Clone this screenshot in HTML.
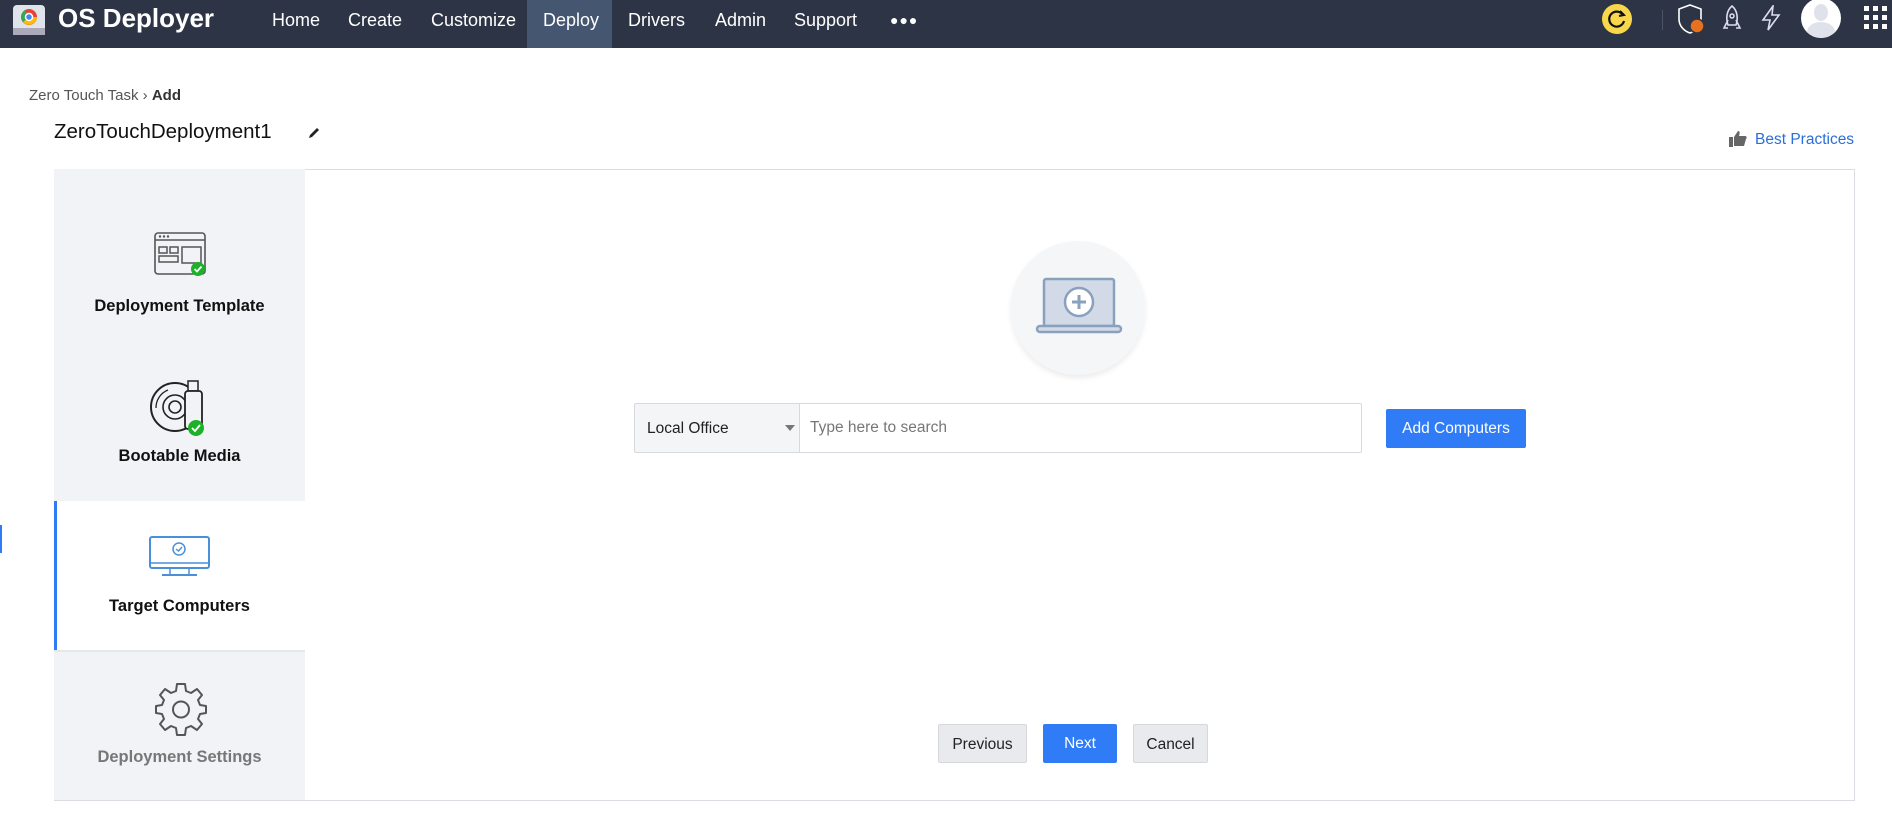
<!DOCTYPE html>
<html><head><meta charset="utf-8"><style>
*{box-sizing:border-box;margin:0;padding:0}
body{width:1892px;height:813px;background:#fff;font-family:"Liberation Sans",sans-serif;position:relative;overflow:hidden;color:#222}
.abs{position:absolute}
.nav{left:0;top:0;width:1892px;height:48px;background:#2d3446}
.ni{top:0;height:48px;line-height:40px;color:#fff;font-size:18px}
.side{left:54px;top:169px;width:251px;height:631px;background:#f2f3f6}
.lbl{width:251px;text-align:center;font-size:16.5px;font-weight:bold;color:#111}
.btn{height:39px;line-height:39px;text-align:center;font-size:15.5px;border-radius:2px}
</style></head><body>
<div class="abs nav"></div>
<svg class="abs" style="left:12px;top:4px" width="34" height="32" viewBox="0 0 34 32"><rect x="1" y="1" width="32" height="30" rx="4" fill="#dfe3ea"/><rect x="1" y="24" width="32" height="7" fill="#aab"/><circle cx="17" cy="13" r="8" fill="#e94235"/><path d="M17 13 L25 13 A8 8 0 0 1 11 18Z" fill="#fbbc04"/><path d="M17 13 L11 18 A8 8 0 0 1 13 6Z" fill="#34a853"/><circle cx="17" cy="13" r="3.5" fill="#4285f4" stroke="#fff" stroke-width="1.5"/></svg>
<div class="abs ni" style="left:58px;font-size:26px;font-weight:bold;line-height:36px">OS Deployer</div>
<div class="abs ni" style="left:272px">Home</div>
<div class="abs ni" style="left:348px">Create</div>
<div class="abs ni" style="left:431px">Customize</div>
<div class="abs" style="left:527px;top:0;width:85px;height:48px;background:#455670"></div>
<div class="abs ni" style="left:543px">Deploy</div>
<div class="abs ni" style="left:628px">Drivers</div>
<div class="abs ni" style="left:715px">Admin</div>
<div class="abs ni" style="left:794px">Support</div>
<div class="abs ni" style="left:890px;font-size:14px;letter-spacing:1px">●●●</div>
<svg class="abs" style="left:1601px;top:3px" width="32" height="32"><circle cx="16" cy="16" r="15" fill="#f8d84a"/><path d="M22 12 A7.5 7.5 0 1 0 23 18" stroke="#111" stroke-width="2.2" fill="none"/><path d="M19 8 L23 12 L18 13" stroke="#111" stroke-width="2" fill="none"/></svg>
<div class="abs" style="left:1662px;top:10px;width:1px;height:20px;background:#4a5468"></div>
<svg class="abs" style="left:1676px;top:3px" width="32" height="32"><path d="M14 2 L25 6 V16 C25 23 20 28 14 30 C8 28 3 23 3 16 V6Z" fill="none" stroke="#fff" stroke-width="1.6"/><circle cx="21" cy="23" r="7" fill="#e8711f" stroke="#2d3446" stroke-width="1.5"/></svg>
<svg class="abs" style="left:1720px;top:4px" width="24" height="28"><path d="M12 2 C18 7 18 15 16 21 H8 C6 15 6 7 12 2Z M8 16 L4 24 H8 M16 16 L20 24 H16" fill="none" stroke="#dde" stroke-width="1.6"/><circle cx="12" cy="12" r="2" fill="none" stroke="#dde" stroke-width="1.5"/></svg>
<svg class="abs" style="left:1760px;top:5px" width="22" height="26"><path d="M13 1 L3 15 H10 L8 25 L19 10 H12Z" fill="none" stroke="#dde" stroke-width="1.6"/></svg>
<div class="abs" style="left:1801px;top:-2px;width:40px;height:40px;border-radius:50%;background:#fff;overflow:hidden"><div style="position:absolute;left:13px;top:6px;width:14px;height:17px;border-radius:50%;background:#dfe2ea"></div><div style="position:absolute;left:6px;top:24px;width:28px;height:20px;border-radius:50% 50% 0 0;background:#dfe2ea"></div></div>
<svg class="abs" style="left:1864px;top:5px" width="24" height="26"><g fill="#fff"><rect x="0" y="1" width="5" height="5"/><rect x="9" y="1" width="5" height="5"/><rect x="18" y="1" width="5" height="5"/><rect x="0" y="10" width="5" height="5"/><rect x="9" y="10" width="5" height="5"/><rect x="18" y="10" width="5" height="5"/><rect x="0" y="19" width="5" height="5"/><rect x="9" y="19" width="5" height="5"/><rect x="18" y="19" width="5" height="5"/></g></svg>

<div class="abs" style="left:29px;top:87px;font-size:15px;color:#555">Zero Touch Task › <b style="color:#333">Add</b></div>
<div class="abs" style="left:54px;top:120px;font-size:20.5px;color:#111">ZeroTouchDeployment1</div>
<svg class="abs" style="left:306px;top:125px" width="16" height="16"><path d="M3 13 L4 10 L11 3 L13 5 L6 12Z" fill="#222"/></svg>
<svg class="abs" style="left:1728px;top:130px" width="20" height="18"><rect x="1" y="7" width="4" height="10" fill="#666"/><path d="M6 7 L10 1 C12 1 12 3 11 6 H17 C19 6 19 8 18 9 L16 16 H6Z" fill="#666"/></svg>
<div class="abs" style="left:1755px;top:131px;font-size:15.5px;color:#2a6fdb">Best Practices</div>
<div class="abs" style="left:0;top:525px;width:2px;height:28px;background:#2f7cf6"></div>

<div class="abs" style="left:54px;top:169px;width:1801px;height:632px;border:1px solid #dcdde2"></div>
<div class="abs side"></div>
<svg class="abs" style="left:154px;top:232px" width="56" height="56"><rect x="1" y="1" width="50" height="41" rx="3" fill="none" stroke="#555" stroke-width="1.6"/><line x1="1" y1="8" x2="51" y2="8" stroke="#555" stroke-width="1.5"/><circle cx="6" cy="4.5" r="1.2" fill="#555"/><circle cx="10" cy="4.5" r="1.2" fill="#555"/><circle cx="14" cy="4.5" r="1.2" fill="#555"/><g fill="none" stroke="#555" stroke-width="1.5"><rect x="5" y="15" width="8" height="6"/><rect x="16" y="15" width="8" height="6"/><rect x="5" y="24" width="19" height="6"/><rect x="28" y="15" width="19" height="16"/></g><circle cx="44" cy="37" r="7" fill="#1db12a"/><path d="M40.5 37 L43 39.5 L47.5 34.5" stroke="#fff" stroke-width="1.8" fill="none"/></svg>
<div class="abs lbl" style="left:54px;top:297px">Deployment Template</div>
<svg class="abs" style="left:148px;top:376px" width="64" height="62"><circle cx="27" cy="31" r="24" fill="none" stroke="#222" stroke-width="2"/><circle cx="27" cy="31" r="12" fill="none" stroke="#222" stroke-width="1.6"/><circle cx="27" cy="31" r="6" fill="none" stroke="#222" stroke-width="1.6"/><path d="M8 32 A19 19 0 0 1 20 14" fill="none" stroke="#222" stroke-width="1.3"/><rect x="40" y="5" width="10" height="10" fill="#f2f3f6" stroke="#222" stroke-width="1.5"/><rect x="37" y="15" width="17" height="38" rx="3" fill="#f2f3f6" stroke="#222" stroke-width="1.8"/><circle cx="48" cy="52" r="8" fill="#1db12a"/><path d="M44 52 L47 55 L52 49" stroke="#fff" stroke-width="1.8" fill="none"/></svg>
<div class="abs lbl" style="left:54px;top:447px">Bootable Media</div>
<div class="abs" style="left:54px;top:501px;width:251px;height:149px;background:#fff;border-left:3px solid #2f7cf6"></div>
<svg class="abs" style="left:148px;top:535px" width="64" height="48"><rect x="2" y="2" width="59" height="31" rx="2" fill="none" stroke="#4a90d9" stroke-width="2"/><line x1="2" y1="28" x2="61" y2="28" stroke="#4a90d9" stroke-width="1.5"/><line x1="22" y1="34" x2="22" y2="40" stroke="#4a90d9" stroke-width="1.5"/><line x1="41" y1="34" x2="41" y2="40" stroke="#4a90d9" stroke-width="1.5"/><line x1="14" y1="40" x2="49" y2="40" stroke="#4a90d9" stroke-width="2"/><circle cx="31" cy="14" r="6" fill="none" stroke="#4a90d9" stroke-width="1.5"/><path d="M28 14 L30.5 16 L34 12" stroke="#4a90d9" stroke-width="1.4" fill="none"/></svg>
<div class="abs lbl" style="left:54px;top:597px">Target Computers</div>
<div class="abs" style="left:54px;top:650px;width:251px;height:2px;background:#e6e7ea"></div>
<svg class="abs" style="left:154px;top:681px" width="54" height="56" viewBox="0 0 54 56"><path d="M23 3 H31 L32 10 L37 12 L43 8 L48 14 L44 19 L46 24 L52 25 V32 L46 33 L44 38 L48 43 L43 49 L37 45 L32 47 L31 54 H23 L22 47 L17 45 L11 49 L6 43 L10 38 L8 33 L2 32 V25 L8 24 L10 19 L6 14 L11 8 L17 12 L22 10Z" fill="none" stroke="#555" stroke-width="2" stroke-linejoin="round"/><circle cx="27" cy="28.5" r="8" fill="none" stroke="#555" stroke-width="2"/></svg>
<div class="abs lbl" style="left:54px;top:748px;color:#777">Deployment Settings</div>

<div class="abs" style="left:1011px;top:241px;width:134px;height:134px;border-radius:50%;background:#f5f6f8;box-shadow:0 3px 6px rgba(0,0,0,.08)"></div>
<svg class="abs" style="left:1035px;top:276px" width="88" height="62"><rect x="9" y="3" width="70" height="47" rx="2" fill="#d1dae6" stroke="#8aa1be" stroke-width="2.5"/><rect x="2" y="50" width="84" height="6" rx="3" fill="#d1dae6" stroke="#8aa1be" stroke-width="2.5"/><circle cx="44" cy="26" r="14" fill="#fff" stroke="#8aa1be" stroke-width="2.5"/><path d="M44 19 V33 M37 26 H51" stroke="#8aa1be" stroke-width="3"/></svg>

<div class="abs" style="left:634px;top:403px;width:728px;height:50px;border:1px solid #d8d9de;border-radius:2px"></div>
<div class="abs" style="left:635px;top:404px;width:165px;height:48px;background:#f4f5f7;border-right:1px solid #d8d9de"></div>
<div class="abs" style="left:647px;top:420px;font-size:15.5px;color:#222">Local Office</div>
<div class="abs" style="left:785px;top:425px;width:0;height:0;border-left:5px solid transparent;border-right:5px solid transparent;border-top:6px solid #777"></div>
<div class="abs" style="left:810px;top:419px;font-size:15.5px;color:#777">Type here to search</div>
<div class="abs btn" style="left:1386px;top:409px;width:140px;background:#2f7cf6;color:#fff">Add Computers</div>

<div class="abs btn" style="left:938px;top:724px;width:89px;background:#e9eaed;border:1px solid #d6d7db;color:#222">Previous</div>
<div class="abs btn" style="left:1043px;top:724px;width:74px;background:#2f7cf6;color:#fff">Next</div>
<div class="abs btn" style="left:1133px;top:724px;width:75px;background:#e9eaed;border:1px solid #d6d7db;color:#222">Cancel</div>
</body></html>
